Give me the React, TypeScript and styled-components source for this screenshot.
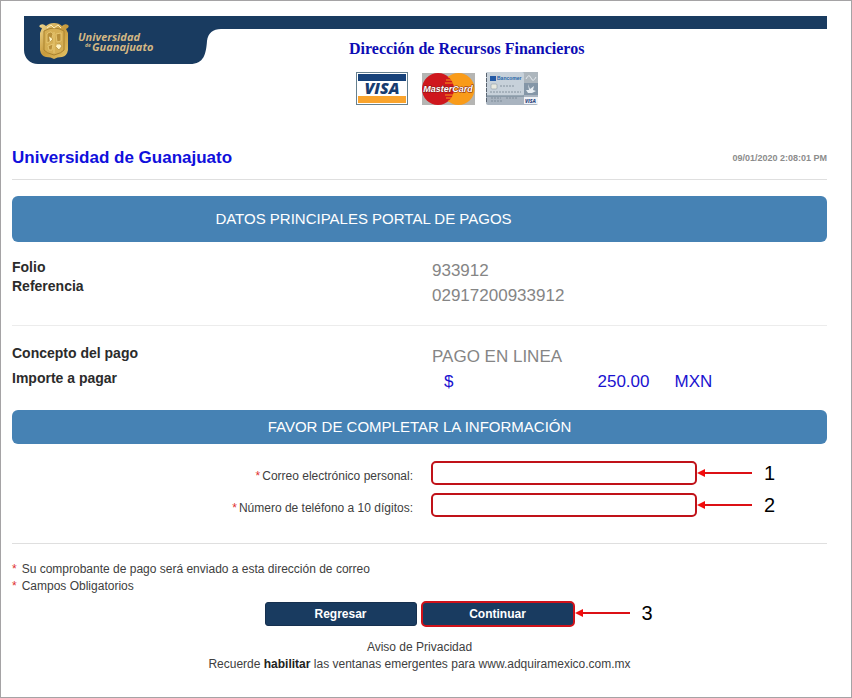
import React from "react";
import styled, { createGlobalStyle } from "styled-components";

const GlobalStyle = createGlobalStyle`
  *, *::before, *::after { box-sizing: border-box; }
  body {
    margin: 0;
    background: #fff;
    color: #404040;
    font-family: "Liberation Sans", Arial, sans-serif;
    font-size: 12px;
    line-height: 17px;
  }
`;

const Page = styled.main`
  min-height: 100vh;
  border: 1px solid #a5a3a5;
  padding: 15px 24px 16px 11px;
`;

const Header = styled.header`
  display: grid;
  grid-template-columns: 204px 1fr;
  margin-left: 12px;
`;

const BrandLogo = styled.svg`
  display: block;
  width: 204px;
  height: 48px;
`;

const HeaderBody = styled.div`
  border-top: 13px solid #193b60;
  padding: 10px 0 0 121px;
`;

const Department = styled.h1`
  margin: 0;
  color: #0c0cb4;
  font: bold 16px/20px "Liberation Serif", "Times New Roman", serif;
`;

const CardLogos = styled.div`
  display: flex;
  align-items: center;
  margin: 12px 0 0 7px;
`;

const CardLogo = styled.svg<{ $gap?: number }>`
  display: block;
  margin-left: ${(p) => p.$gap ?? 0}px;
`;

const TitleRow = styled.div`
  display: flex;
  justify-content: space-between;
  align-items: center;
  margin-top: 43px;
  padding-bottom: 11px;
  border-bottom: 1px solid #dfdfdf;
`;

const Merchant = styled.h2`
  margin: 0;
  color: #1010dc;
  font-size: 17px;
  line-height: 20px;
`;

const Timestamp = styled.time`
  color: #8c8c8c;
  font-size: 9px;
  font-weight: bold;
`;

const SectionBar = styled.h3<{ $tall?: boolean }>`
  margin: 16px 0 0;
  padding: ${(p) => (p.$tall ? "13px 112px 13px 0" : "7px 0")};
  border-radius: 6px;
  background: #4682b4;
  color: #fff;
  font-size: 15px;
  font-weight: normal;
  line-height: 20px;
  text-align: center;
`;

const Details = styled.section<{ $divided?: boolean }>`
  display: grid;
  grid-template-columns: 420fr 395fr;
  padding: ${(p) => (p.$divided ? "16px 0 17px" : "15px 0 0")};
  border-bottom: ${(p) => (p.$divided ? "1px solid #ececec" : "none")};
`;

const Labels = styled.div<{ $line: number }>`
  color: #2b2b2b;
  font-size: 14px;
  font-weight: bold;
  line-height: ${(p) => p.$line}px;
`;

const Values = styled.div<{ $drop?: number }>`
  padding-top: ${(p) => p.$drop ?? 0}px;
  color: #858585;
  font-size: 17px;
  line-height: 25px;
`;

const Amount = styled.div`
  display: flex;
  color: #1a12d0;
`;

const Currency = styled.span`
  padding-left: 12px;
`;

const Figure = styled.span`
  width: 196px;
  text-align: right;
`;

const Code = styled.span`
  padding-left: 25px;
`;

const Fields = styled.form`
  display: grid;
  gap: 8px;
  padding: 17px 0 26px;
  border-bottom: 1px solid #dfdfdf;
`;

const FieldRow = styled.div`
  display: grid;
  grid-template-columns: 401fr 396fr;
  column-gap: 18px;
  align-items: center;
`;

const FieldLabel = styled.label`
  padding-top: 6px;
  text-align: right;
`;

const Required = styled.span`
  margin-right: 2px;
  color: #e03030;
`;

const FieldControl = styled.div`
  display: flex;
  align-items: center;
`;

const TextInput = styled.input`
  width: 266px;
  height: 24px;
  padding: 0 8px;
  border: 2px solid #c01219;
  border-radius: 5px;
  background: #fff;
  font: 12px "Liberation Sans", Arial, sans-serif;
`;

const Callout = styled.span`
  display: flex;
  align-items: center;
  gap: 12px;
  color: #000;
  font-size: 20px;
  line-height: 24px;
`;

const Notes = styled.ul`
  margin: 0;
  padding: 17px 0 0;
  list-style: none;
`;

const Note = styled.li`
  display: flex;
  gap: 3px;
`;

const Actions = styled.div`
  display: flex;
  justify-content: center;
  align-items: center;
  gap: 4px;
  margin-top: 6px;
`;

const ActionSlot = styled.div`
  position: relative;
`;

const ActionCallout = styled(Callout)`
  position: absolute;
  left: 100%;
  top: 0;
`;

const ActionButton = styled.button<{ $marked?: boolean }>`
  display: block;
  width: ${(p) => (p.$marked ? 154 : 152)}px;
  height: ${(p) => (p.$marked ? 26 : 24)}px;
  padding: 0;
  border: ${(p) => (p.$marked ? "2px solid #d0121a" : "1px solid #16304f")};
  border-radius: ${(p) => (p.$marked ? 5 : 3)}px;
  background: #193b60;
  color: #fff;
  font: bold 12px "Liberation Sans", Arial, sans-serif;
`;

const Footer = styled.footer`
  margin-top: 12px;
  text-align: center;
`;

const Strong = styled.strong`
  color: #222;
`;

const PrivacyLink = styled.a`
  color: inherit;
  text-decoration: none;
`;

function Brand() {
  return (
    <BrandLogo viewBox="0 0 204 48" role="img" aria-label="Universidad de Guanajuato">
      <defs>
        <linearGradient id="gold" x1="0" y1="0" x2="1" y2="1">
          <stop offset="0" stopColor="#f0d992" />
          <stop offset="0.5" stopColor="#c79a3c" />
          <stop offset="1" stopColor="#e6c668" />
        </linearGradient>
      </defs>
      <path d="M0 0H204V13H197C189 13 184 17 183 25C182 38 180 48 166 48H14C6 48 0 42 0 34Z" fill="#193b60" />
      <path d="M18 12Q14 11 16 9Q19 7 22 10Q25 7 30 7Q35 7 38 10Q41 7 44 9Q46 11 42 13L44 17V34Q43 40 38 41Q33 41 30 43Q27 41 22 41Q17 40 16 34V17Z" fill="url(#gold)" />
      <path d="M20 15Q30 9 40 15V34Q38 37 30 39Q22 37 20 34Z" fill="#d5ae53" stroke="#a9822f" />
      <path d="M23 18Q27 14 29 18L27 25L23 27ZM32 18L37 17V25L33 26ZM24 30L29 28L28 34L25 34ZM30 16V37" fill="#b88f3a" stroke="#edcf7b" strokeWidth="0.8" />
      <path d="M25 20L29 23L26 26M33 28Q36 27 38 30L35 34L32 31" fill="#fff3c3" stroke="#a9822f" strokeWidth="0.6" />
      <path d="M23 12L27 9L30 12L34 9L37 12" fill="none" stroke="#fff0bd" />
      <g fill="#d3b783" fontFamily="Open Sans, Noto Sans, sans-serif" fontStyle="italic" fontWeight="700">
        <text x="54" y="25" fontSize="11">Universidad</text>
        <text x="61" y="31" fontSize="5">de</text>
        <text x="68" y="35" fontSize="11">Guanajuato</text>
      </g>
    </BrandLogo>
  );
}

function Visa() {
  return (
    <CardLogo width="52" height="33" viewBox="0 0 52 33" role="img" aria-label="VISA">
      <rect x="0.5" y="0.5" width="51" height="32" fill="#fff" stroke="#66808f" />
      <rect x="2" y="2" width="48" height="7" fill="#17427a" />
      <rect x="2" y="24" width="48" height="7" fill="#faa42d" />
      <text x="26" y="22" textAnchor="middle" fill="#173c70" fontFamily="Open Sans, sans-serif" fontSize="16" fontStyle="italic" fontWeight="800">VISA</text>
    </CardLogo>
  );
}

function MasterCard() {
  return (
    <CardLogo $gap={13} width="55" height="33" viewBox="0 0 55 33" role="img" aria-label="MasterCard">
      <rect x="1" y="1" width="53" height="32" fill="#b5b5b3" />
      <circle cx="37.5" cy="17" r="16" fill="#f99b19" />
      <circle cx="17" cy="17" r="16" fill="#cf171d" />
      <path d="M27 5H31M25 8H32M24 11H33M24 23H33M25 26H32M27 29H30" stroke="#f99b19" />
      <text
        x="27"
        y="20"
        fill="#fff"
        stroke="#7c1a14"
        strokeWidth="1"
        paintOrder="stroke"
        fontFamily="Liberation Sans, Arial, sans-serif"
        fontSize="9"
        fontStyle="italic"
        fontWeight="bold"
        textAnchor="middle"
      >
        MasterCard
      </text>
    </CardLogo>
  );
}

function BankCard() {
  return (
    <CardLogo $gap={9} width="54" height="34" viewBox="0 0 54 34" role="img" aria-label="Bancomer VISA">
      <rect x="1" y="1" width="52" height="33" rx="2" fill="#a9b4c0" />
      <rect x="1" y="1" width="38" height="24" rx="2" fill="#c7d1da" />
      <path d="M1.5 2V32" stroke="#59636f" strokeDasharray="4 1" />
      <rect x="5" y="5" width="6" height="5" fill="#2359a5" />
      <text x="12" y="9" fill="#2462a7" fontFamily="Liberation Sans" fontSize="5" fontWeight="bold">Bancomer</text>
      <rect x="6" y="13" width="6" height="5" rx="1" fill="#e8e9df" stroke="#8d9aa5" strokeWidth="0.6" />
      <path d="M15 15H29M5 21H36M6 27H16M21 27H32M6 30H17" stroke="#738491" strokeDasharray="2 1" strokeWidth="0.8" />
      <rect x="39" y="1" width="14" height="11" fill="#adb6bd" />
      <path d="M41 8Q44 2 46 7T51 6" fill="none" stroke="#e4e9ed" />
      <rect x="39" y="12" width="14" height="12" fill="#8496a7" />
      <path d="M43 13L45 18L49 15L48 19L51 20L47 22H43L41 19L44 19Z" fill="#e7edf2" />
      <path d="M1 25H39" stroke="#6e8292" />
      <rect x="39" y="26" width="14" height="7" fill="#f1f3f7" />
      <text x="40" y="32" fill="#344a83" fontFamily="Open Sans" fontSize="5" fontStyle="italic" fontWeight="800">VISA</text>
    </CardLogo>
  );
}

function Arrow() {
  return (
    <svg width="55" height="10" viewBox="0 0 55 10" aria-hidden="true">
      <path d="M7 5H55" stroke="#dc1015" strokeWidth="2" />
      <path d="M0 5L8 1V9Z" fill="#f20c0c" />
    </svg>
  );
}

interface FieldProps {
  id: string;
  label: string;
  type: string;
  step: string;
}

function Field({ id, label, type, step }: FieldProps) {
  return (
    <FieldRow>
      <FieldLabel htmlFor={id}>
        <Required>*</Required>
        {label}
      </FieldLabel>
      <FieldControl>
        <TextInput id={id} name={id} type={type} required />
        <Callout>
          <Arrow />
          {step}
        </Callout>
      </FieldControl>
    </FieldRow>
  );
}

export default function App() {
  return (
    <>
      <GlobalStyle />
      <Page>
        <Header>
          <Brand />
          <HeaderBody>
            <Department>Dirección de Recursos Financieros</Department>
            <CardLogos>
              <Visa />
              <MasterCard />
              <BankCard />
            </CardLogos>
          </HeaderBody>
        </Header>

        <TitleRow>
          <Merchant>Universidad de Guanajuato</Merchant>
          <Timestamp>09/01/2020 2:08:01 PM</Timestamp>
        </TitleRow>

        <SectionBar $tall>DATOS PRINCIPALES PORTAL DE PAGOS</SectionBar>

        <Details $divided>
          <Labels $line={19}>
            <div>Folio</div>
            <div>Referencia</div>
          </Labels>
          <Values>
            <div>933912</div>
            <div>02917200933912</div>
          </Values>
        </Details>

        <Details>
          <Labels $line={25}>
            <div>Concepto del pago</div>
            <div>Importe a pagar</div>
          </Labels>
          <Values $drop={3}>
            <div>PAGO EN LINEA</div>
            <Amount>
              <Currency>$</Currency>
              <Figure>250.00</Figure>
              <Code>MXN</Code>
            </Amount>
          </Values>
        </Details>

        <SectionBar>FAVOR DE COMPLETAR LA INFORMACIÓN</SectionBar>

        <Fields id="pago">
          <Field id="correo" label="Correo electrónico personal:" type="email" step="1" />
          <Field id="telefono" label="Número de teléfono a 10 dígitos:" type="tel" step="2" />
        </Fields>

        <Notes>
          <Note>
            <Required>*</Required>
            Su comprobante de pago será enviado a esta dirección de correo
          </Note>
          <Note>
            <Required>*</Required>
            Campos Obligatorios
          </Note>
        </Notes>

        <Actions>
          <ActionButton type="button">Regresar</ActionButton>
          <ActionSlot>
            <ActionButton type="submit" form="pago" $marked>
              Continuar
            </ActionButton>
            <ActionCallout>
              <Arrow />3
            </ActionCallout>
          </ActionSlot>
        </Actions>

        <Footer>
          <div>
            <PrivacyLink href="#aviso">Aviso de Privacidad</PrivacyLink>
          </div>
          <div>
            Recuerde <Strong>habilitar</Strong> las ventanas emergentes para www.adquiramexico.com.mx
          </div>
        </Footer>
      </Page>
    </>
  );
}
